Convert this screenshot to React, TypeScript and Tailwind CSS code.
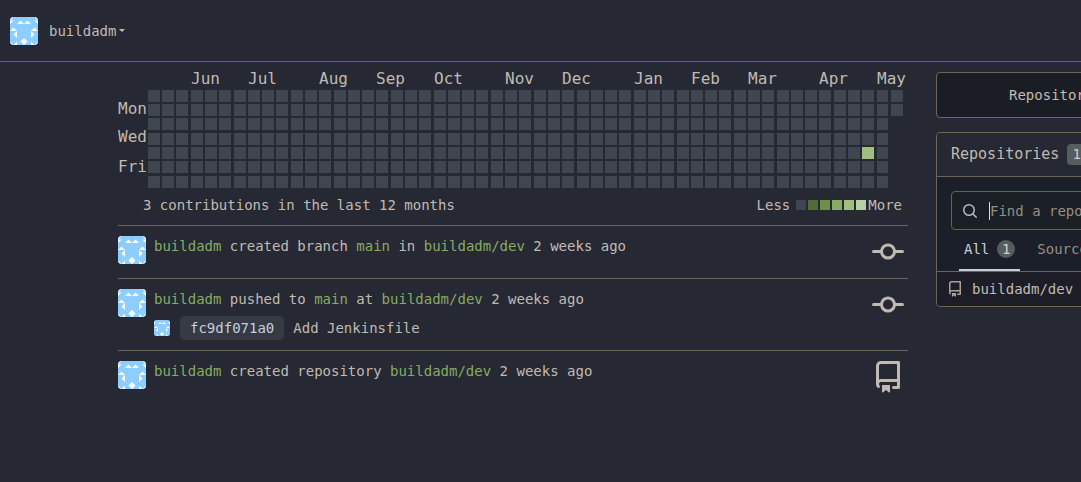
import React from 'react';

const COMMIT =
  'M11.93 8.5a4.002 4.002 0 0 1-7.86 0H.75a.75.75 0 0 1 0-1.5h3.32a4.002 4.002 0 0 1 7.86 0h3.32a.75.75 0 0 1 0 1.5Zm-1.43-.75a2.5 2.5 0 1 0-5 0 2.5 2.5 0 0 0 5 0Z';
const REPO =
  'M2 2.5A2.5 2.5 0 0 1 4.5 0h8.75a.75.75 0 0 1 .75.75v12.5a.75.75 0 0 1-.75.75h-2.5a.75.75 0 0 1 0-1.5h1.75v-2h-8a1 1 0 0 0-.714 1.7.75.75 0 1 1-1.072 1.05A2.495 2.495 0 0 1 2 11.5Zm10.5-1h-8a1 1 0 0 0-1 1v6.708A2.486 2.486 0 0 1 4.5 9h8ZM5 12.25a.25.25 0 0 1 .25-.25h3.5a.25.25 0 0 1 .25.25v3.25a.25.25 0 0 1-.4.2l-1.45-1.087a.249.249 0 0 0-.3 0L5.4 15.7a.25.25 0 0 1-.4-.2Z';
const SEARCH =
  'M10.68 11.74a6 6 0 0 1-7.922-8.982 6 6 0 0 1 8.982 7.922l3.04 3.04a.749.749 0 0 1-.326 1.275.749.749 0 0 1-.734-.215ZM11.5 7a4.499 4.499 0 1 0-8.997 0A4.499 4.499 0 0 0 11.5 7Z';

function Icon({ path, className }: { path: string; className: string }) {
  return (
    <svg viewBox="0 0 16 16" className={className} fill="currentColor" aria-hidden="true">
      <path d={path} />
    </svg>
  );
}

function Avatar({ className }: { className: string }) {
  return (
    <svg viewBox="0 0 8 8" className={className} aria-hidden="true">
      <rect width="8" height="8" fill="#8cceff" />
      <g fill="#fff">
        <path d="M0 0H1L0 1ZM0 2V1L1 1ZM8 0H7L8 1ZM8 2V1L7 1Z" />
        <path d="M2 2 3 1 4 2ZM4 2 5 1 6 2Z" />
        <path d="M0 4 1 3 2 4ZM6 4 7 3 8 4Z" />
        <path d="M2 4V6L1 5ZM6 4V6L7 5Z" />
        <path d="M4 6 5 7 4 8 3 7Z" />
        <path d="M0 7V8H1ZM1 8 2 7V8ZM8 7V8H7ZM7 8 6 7V8Z" />
      </g>
    </svg>
  );
}

const MONTHS: [string, number][] = [
  ['Jun', 3], ['Jul', 7], ['Aug', 12], ['Sep', 16], ['Oct', 20], ['Nov', 25],
  ['Dec', 29], ['Jan', 34], ['Feb', 38], ['Mar', 42], ['Apr', 47], ['May', 51],
];
const DAYS: [string, number][] = [['Mon', 52], ['Wed', 80], ['Fri', 110]];

// Snaps the n-th week or weekday to a whole pixel.
const snap = (n: number) => Math.round(n * 14.29 - 0.2);

function Heatmap() {
  const cells: React.ReactElement[] = [];
  for (let week = 0; week < 53; week++) {
    for (let day = 0; day < (week === 52 ? 2 : 7); day++) {
      cells.push(
        <rect
          key={`${week}-${day}`}
          x={30 + snap(week)}
          y={28 + snap(day)}
          width={week === 51 ? 11 : 12}
          height="12"
          fill={week === 50 && day === 4 ? '#a0bd82' : '#3f4650'}
        />,
      );
    }
  }
  return (
    <svg viewBox="0 0 790 128" className="block w-full" fill="#c0bbb2" fontSize="16" role="img" aria-label="Contributions">
      {MONTHS.map(([name, week]) => (
        <text key={name} x={30 + snap(week)} y="22">{name}</text>
      ))}
      {DAYS.map(([name, y]) => (
        <text key={name} x="0" y={y}>{name}</text>
      ))}
      {cells}
    </svg>
  );
}

function Link({ children }: { children: string }) {
  return <a href="#" className="text-[#87ab63]">{children}</a>;
}

function Entry({ icon, children, extra }: {
  icon: string; children: React.ReactNode; extra?: React.ReactNode;
}) {
  return (
    <li className="flex items-start gap-2 border-t border-[#6e6558] py-[10px]">
      <Avatar className="size-7 shrink-0 rounded" />
      <div className="min-w-0 flex-1">
        <p className="leading-5">{children}</p>
        {extra}
      </div>
      <Icon path={icon} className="mr-1 size-8 shrink-0" />
    </li>
  );
}

export default function App() {
  return (
    <div className="min-h-screen overflow-x-hidden bg-[#262833] font-['DejaVu_Sans_Mono','Liberation_Mono',monospace] text-sm text-[#c0bbb2]">
      <header className="border-b border-[#6e6558] px-[10px] py-4">
        <button type="button" className="flex h-[29px] items-center">
          <Avatar className="size-7 rounded" />
          <span className="ml-[11px]">buildadm</span>
          <svg viewBox="0 0 6 3" className="ml-[3px] h-[3px] w-[6px]" fill="currentColor" aria-hidden="true">
            <path d="M0 0h6L3 3Z" />
          </svg>
        </button>
      </header>

      <div className="grid grid-cols-[minmax(0,1fr)_145px] gap-7 pl-[118px]">
        <main>
          <Heatmap />
          <div className="mb-[10px] mt-[5px] flex h-5 items-center justify-between pl-[25px] pr-[6px]">
            <span>3 contributions in the last 12 months</span>
            <div className="flex items-center gap-[2px]">
              <span className="mr-1">Less</span>
              <i className="size-[10px] bg-[#3f4650]" />
              <i className="size-[10px] bg-[#526b38]" />
              <i className="size-[10px] bg-[#6c8f4a]" />
              <i className="size-[10px] bg-[#87ab63]" />
              <i className="size-[10px] bg-[#a0bd82]" />
              <i className="size-[10px] bg-[#b9cfa2]" />
              <span>More</span>
            </div>
          </div>
          <ul>
            <Entry icon={COMMIT}>
              <Link>buildadm</Link> created branch <Link>main</Link> in <Link>buildadm/dev</Link> 2 weeks ago
            </Entry>
            <Entry
              icon={COMMIT}
              extra={
                <div className="mt-[7px] flex h-6 items-center">
                  <Avatar className="size-4 rounded-[3px]" />
                  <a href="#" className="ml-[10px] rounded bg-[#363a44] px-[10px] leading-6 text-[#c5d0dd]">fc9df071a0</a>
                  <span className="ml-[9px]">Add Jenkinsfile</span>
                </div>
              }
            >
              <Link>buildadm</Link> pushed to <Link>main</Link> at <Link>buildadm/dev</Link> 2 weeks ago
            </Entry>
            <Entry icon={REPO}>
              <Link>buildadm</Link> created repository <Link>buildadm/dev</Link> 2 weeks ago
            </Entry>
          </ul>
        </main>

        <aside className="mt-[10px]">
          <div className="w-[460px]">
            <div className="flex h-[46px] rounded border border-[#6e6558] bg-[#1a1e24]">
              <button type="button" className="w-1/2 pl-[72px] text-left">Repository</button>
            </div>
            <section className="mt-[14px] rounded border border-[#6e6558] bg-[#1b1f29]">
              <h2 className="flex h-11 items-center gap-2 rounded-t border-b border-[#6e6558] bg-[#262833] pl-[14px] text-[15px]">
                Repositories
                <span className="rounded bg-[#565d61] px-[5px] text-sm leading-[21px] text-[#d0cdc8]">1</span>
              </h2>
              <div className="px-[14px] pt-[14px]">
                <label className="flex h-[39px] items-center rounded border border-[#556f3c] bg-[#1a1f25] pl-[10px]">
                  <Icon path={SEARCH} className="size-4 shrink-0 text-[#b3bcc9]" />
                  <span className="ml-[11px] h-[18px] w-px bg-[#dadada]" />
                  <input
                    type="text"
                    aria-label="Find a repository"
                    placeholder="Find a repository"
                    className="min-w-0 flex-1 bg-transparent outline-none placeholder:text-[#958f85]"
                  />
                </label>
              </div>
              <nav className="flex h-[42px] items-stretch gap-3 border-b border-[#6e6558] pl-[22px]">
                <a href="#" className="flex items-center gap-2 border-b-2 border-[#c5d0dd] px-[5px] pb-[2px] text-[#c5d0dd]">
                  All
                  <span className="size-[18px] rounded-full bg-[#565d61] text-center leading-[18px] text-[#d0cdc8]">1</span>
                </a>
                <a href="#" className="flex items-center px-[5px] pb-1 text-[#958f85]">Sources</a>
              </nav>
              <a href="#" className="flex h-[34px] items-center gap-[9px] rounded-b bg-[#1d1d27] pl-[10px]">
                <Icon path={REPO} className="size-4 shrink-0 text-[#a9a296]" />
                buildadm/dev
              </a>
            </section>
          </div>
        </aside>
      </div>
    </div>
  );
}
